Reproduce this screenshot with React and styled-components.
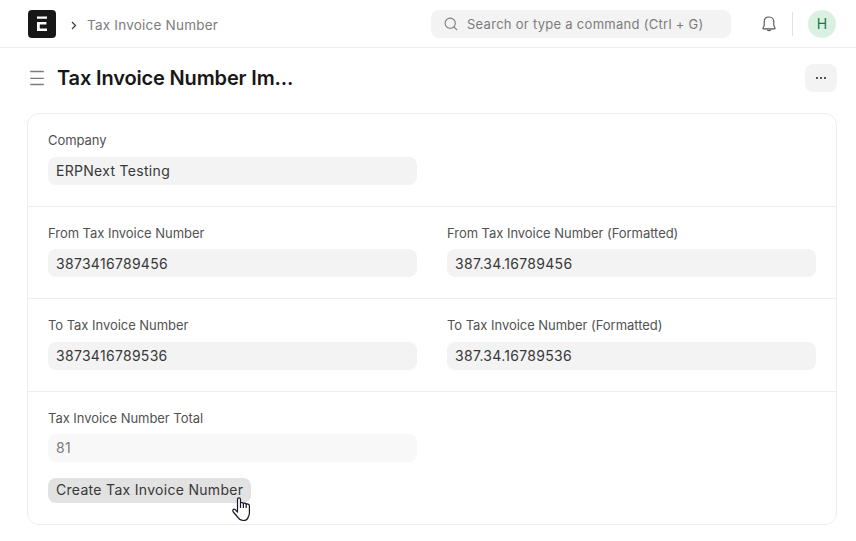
import React from "react";
import styled, { createGlobalStyle } from "styled-components";

const GlobalStyle = createGlobalStyle`
  * { box-sizing: border-box; }
  body {
    margin: 0;
    background: #fff;
    color: #383838;
    font-family: Inter, "Liberation Sans", sans-serif;
    font-size: 14px;
    font-weight: 400;
    letter-spacing: 0.28px;
    overflow: hidden;
  }
`;

const Page = styled.div`
  height: 541px;
  width: 856px;
`;

const Navbar = styled.header`
  display: flex;
  align-items: center;
  height: 48px;
  padding: 0 20px 0 28px;
  border-bottom: 1px solid #ededed;
`;

const Logo = styled.svg`
  width: 28px;
  height: 28px;
  flex: none;
`;

const Chevron = styled.svg`
  width: 6px;
  height: 9px;
  margin: 4px 10px 0 15px;
`;

const Crumb = styled.a`
  flex: 1;
  color: #7c7c7c;
  font-size: 13.5px;
  line-height: 20px;
  padding-top: 2px;
  letter-spacing: 0.22px;
  white-space: nowrap;
`;

const Search = styled.div`
  display: flex;
  align-items: center;
  width: 300px;
  height: 28px;
  padding-left: 13px;
  border-radius: 8px;
  background: #f3f3f3;
  color: #7c7c7c;
  font-size: 13px;
  letter-spacing: 0.28px;
  white-space: nowrap;
`;

const SearchIcon = styled.svg`
  width: 14px;
  height: 14px;
  margin-right: 9px;
`;

const Bell = styled.svg`
  width: 16px;
  height: 18px;
  margin-left: 30px;
`;

const Separator = styled.span`
  width: 1px;
  height: 24px;
  margin: 0 15px;
  background: #e2e2e2;
`;

const Avatar = styled.div`
  display: grid;
  place-items: center;
  width: 28px;
  height: 28px;
  border-radius: 50%;
  background: #daf0e1;
  color: #16794c;
  letter-spacing: 0;
`;

const PageHead = styled.div`
  display: flex;
  align-items: center;
  height: 65px;
  padding: 0 19px 5px 29px;
`;

const MenuIcon = styled.svg`
  width: 16px;
  height: 16px;
`;

const Title = styled.h1`
  flex: 1;
  margin: 0 0 0 12px;
  color: #171717;
  font-size: 20px;
  font-weight: 600;
  line-height: 28px;
  letter-spacing: -0.15px;
`;

const MoreButton = styled.button`
  display: grid;
  place-items: center;
  width: 32px;
  height: 28px;
  padding: 0;
  border: 0;
  border-radius: 8px;
  background: #f3f3f3;
`;

const Card = styled.main`
  width: 810px;
  height: 412px;
  margin-left: 27px;
  border: 1px solid #ededed;
  border-radius: 12px;
`;

const Section = styled.section`
  display: grid;
  grid-template-columns: 369px 369px;
  align-content: start;
  column-gap: 30px;
  height: ${(p) => (p.$short ? 92 : 93)}px;
  padding: 17px 20px 0;
  border-bottom: 1px solid #ededed;

  &:last-child {
    height: auto;
    border-bottom: 0;
  }
`;

const Label = styled.div`
  height: ${(p) => (p.$tall ? 26 : 25)}px;
  color: #525252;
  font-size: 13px;
  line-height: 18px;
  letter-spacing: -0.04px;
  white-space: nowrap;
`;

const Value = styled.div`
  height: 28px;
  padding: 0 8px;
  border-radius: 8px;
  background: ${(p) => (p.$muted ? "#f8f8f8" : "#f3f3f3")};
  color: ${(p) => (p.$muted ? "#7c7c7c" : "#383838")};
  line-height: ${(p) => (p.$low ? 30 : 28)}px;
  letter-spacing: 0.3px;
`;

const CreateButton = styled.button`
  justify-self: start;
  width: 203px;
  height: 25px;
  margin-top: 16px;
  padding: 0 0 1px 8px;
  border: 0;
  border-radius: 8px;
  background: #e2e2e2;
  color: #383838;
  font: inherit;
  line-height: 24px;
  letter-spacing: 0.3px;
  text-align: left;
  white-space: nowrap;
`;

const Pointer = styled.svg`
  position: absolute;
  left: 232px;
  top: 497px;
  width: 19px;
  height: 25px;
`;

function Field({ label, value, muted, tall, low }) {
  return (
    <div>
      <Label $tall={tall}>{label}</Label>
      <Value $muted={muted} $low={low}>{value}</Value>
    </div>
  );
}

export default function App() {
  return (
    <Page>
      <GlobalStyle />
      <Navbar>
        <Logo viewBox="0 0 28 28">
          <rect width="28" height="28" rx="4" fill="#171717" />
          <path d="M9 6.5h10v2.300H9zM9 12.100h9.400v2.400h-6.600v4.100H19V21H9z" fill="#fff" />
        </Logo>
        <Chevron viewBox="0 0 6 9" fill="none" stroke="#383838" strokeWidth="1.2">
          <path d="M1 1l3.5 3.5L1 8" />
        </Chevron>
        <Crumb>Tax Invoice Number</Crumb>
        <Search>
          <SearchIcon viewBox="0 0 14 14" fill="none" stroke="#7c7c7c" strokeWidth="1.1">
            <circle cx="6.2" cy="6.2" r="5.1" />
            <path d="M9.9 9.9l2.8 2.8" strokeLinecap="round" />
          </SearchIcon>
          Search or type a command (Ctrl + G)
        </Search>
        <Bell viewBox="0 0 16 18" fill="none" stroke="#525252" strokeWidth="1.1">
          <path d="M8 2C5 2 3.2 4 3.2 6.800v3.100c0 1.1-.4 1.7-1 2.6-.5.8-.3 1.4.5 1.4h10.6c.8 0 1-.6.5-1.4-.6-.9-1-1.5-1-2.6V6.8C12.800 4 11 2 8 2z" />
          <path d="M6.200 14.500c.2 1.500 3.400 1.500 3.600 0" />
        </Bell>
        <Separator />
        <Avatar>H</Avatar>
      </Navbar>
      <PageHead>
        <MenuIcon viewBox="0 0 16 16" stroke="#7c7c7c" strokeWidth="1.3">
          <path d="M1.200 1.500h13.600M1.200 8.300h13.600M1.200 14.500h13.600" />
        </MenuIcon>
        <Title>Tax Invoice Number Im...</Title>
        <MoreButton aria-label="More">
          <svg width="12" height="2" fill="#525252">
            <path d="M1 0h2v2H1zM5 0h2v2H5zM9 0h2v2H9z" />
          </svg>
        </MoreButton>
      </PageHead>
      <Card>
        <Section>
          <Field tall label="Company" value="ERPNext Testing" />
        </Section>
        <Section $short>
          <Field low label="From Tax Invoice Number" value="3873416789456" />
          <Field low label="From Tax Invoice Number (Formatted)" value="387.34.16789456" />
        </Section>
        <Section>
          <Field tall label="To Tax Invoice Number" value="3873416789536" />
          <Field tall label="To Tax Invoice Number (Formatted)" value="387.34.16789536" />
        </Section>
        <Section $short>
          <Field label="Tax Invoice Number Total" value="81" muted />
          <span />
          <CreateButton>Create Tax Invoice Number</CreateButton>
        </Section>
      </Card>
      <Pointer viewBox="0 0 19 25" fill="#fff" stroke="#171727" strokeWidth="1.2" strokeLinejoin="round">
        <path d="M5.500 15V2.500c0-2.200 3-2.200 3 0V6c.6-.8 2.600-.6 2.900.6.700-.8 2.500-.5 2.800.7.900-.7 3.200-.4 3.200 1.500v7.500c0 2-.8 2.600-1.300 4.200-.8 2.400-2.200 3-4.600 3-2.800 0-4.200-.8-5.500-3L1.300 15c-1.500-2.300.8-3.600 2.200-2.200z" />
        <path d="M8.500 6v5M11.400 6.500V11M14.200 7.300V11" fill="none" />
      </Pointer>
    </Page>
  );
}
